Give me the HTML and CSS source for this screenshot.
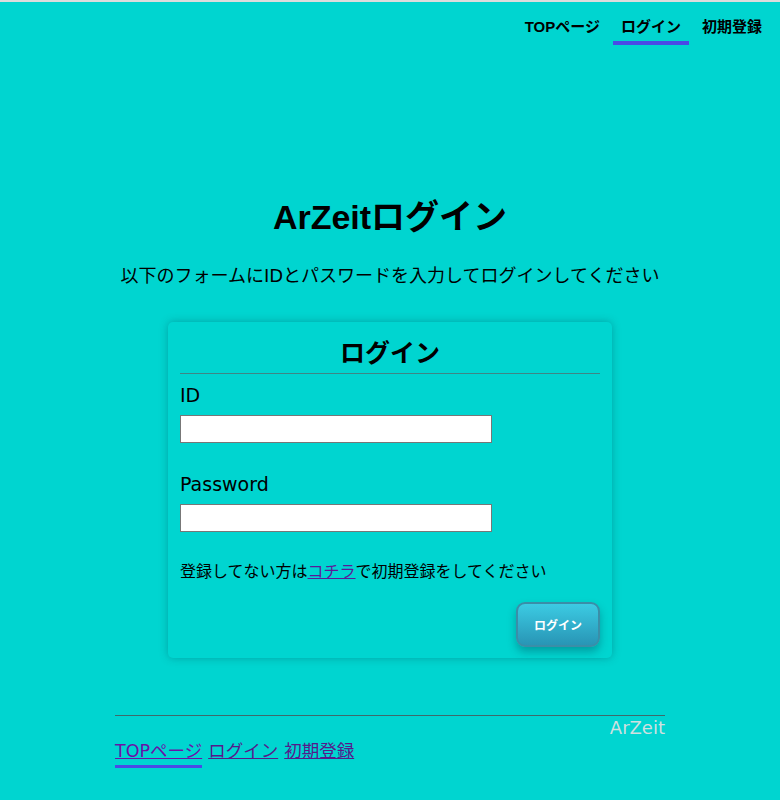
FILE: index.html
```html
<!DOCTYPE html>
<html lang="ja">
<head>
<meta charset="utf-8">
<title>ArZeitログイン</title>
<link rel="stylesheet" href="styles.css">
</head>
<body>
<header class="topbar">
  <ul class="nav">
    <li class="nav-item"><a class="nav-link" href="#">TOPページ</a></li>
    <li class="nav-item nav-item-active"><a class="nav-link" href="#">ログイン</a></li>
    <li class="nav-item"><a class="nav-link" href="#">初期登録</a></li>
  </ul>
</header>
<main class="main">
  <h1 class="title">ArZeitログイン</h1>
  <p class="lead">以下のフォームにIDとパスワードを入力してログインしてください</p>
  <form class="card">
    <h2 class="card-title">ログイン</h2>
    <label class="field-label field-label-first" for="uid">ID</label>
    <input class="field-input" id="uid" type="text">
    <label class="field-label" for="pw">Password</label>
    <input class="field-input" id="pw" type="password">
    <p class="note">登録してない方は<a class="note-link" href="#">コチラ</a>で初期登録をしてください</p>
    <div class="actions"><button class="btn" type="button">ログイン</button></div>
  </form>
</main>
<footer class="footer">
  <div class="brand">ArZeit</div>
  <div class="foot-links">
    <a class="foot-link foot-link-active" href="#">TOPページ</a>
    <a class="foot-link" href="#">ログイン</a>
    <a class="foot-link" href="#">初期登録</a>
  </div>
</footer>
</body>
</html>
```
FILE: styles.css
```css
html, body {
  margin: 0;
  padding: 0;
}
body {
  background: #00d5d0;
  border-top: 2px solid #dcdcdc;
  min-height: 798px;
  font-family: "DejaVu Sans", "Noto Sans CJK JP", sans-serif;
  color: #000;
}
.topbar {
  display: flex;
  justify-content: flex-end;
  padding-right: 10px;
}
.nav {
  list-style: none;
  margin: 0;
  padding: 0;
  display: flex;
  gap: 5px;
}
.nav-item {
  padding: 15px 8px 4px;
  border-bottom: 4px solid transparent;
}
.nav-item-active {
  border-bottom-color: #4a4ae6;
}
.nav-link {
  display: block;
  font-family: "Liberation Sans", "Noto Sans CJK JP", sans-serif;
  font-weight: bold;
  font-size: 15px;
  line-height: 20px;
  color: #000;
  text-decoration: none;
}
.main {
  display: flex;
  flex-direction: column;
  align-items: center;
}
.title {
  margin: 152px 0 0;
  font-family: "Liberation Sans", "Noto Sans CJK JP", sans-serif;
  font-size: 34px;
  line-height: 40px;
  font-weight: bold;
}
.lead {
  margin: 27px 0 0;
  font-size: 18px;
  line-height: 24px;
}
.card {
  margin-top: 34px;
  width: 420px;
  padding: 16px 12px 11px;
  border-radius: 5px;
  box-shadow: 0 0 9px rgba(0, 70, 80, 0.35);
  display: flex;
  flex-direction: column;
  align-items: flex-start;
}
.card-title {
  align-self: stretch;
  margin: 0;
  padding-bottom: 3px;
  border-bottom: 1px solid #3f8585;
  text-align: center;
  font-size: 25px;
  line-height: 32px;
  font-weight: bold;
}
.field-label {
  margin-top: 29px;
  font-size: 19px;
  line-height: 24px;
}
.field-label-first {
  margin-top: 9px;
}
.field-input {
  margin: 8px 0 0;
  box-sizing: border-box;
  width: 312px;
  height: 28px;
  border: 1px solid #777;
  background: #fff;
  padding: 0 4px;
}
.note {
  margin: 28px 0 0;
  font-size: 16px;
  line-height: 24px;
}
.note-link {
  color: #5a1a9a;
}
.actions {
  align-self: stretch;
  display: flex;
  justify-content: flex-end;
  margin-top: 18px;
}
.btn {
  width: 84px;
  height: 45px;
  border: 2px solid #3a8ea8;
  border-radius: 9px;
  background: linear-gradient(#3ccbe3, #2895b5);
  box-shadow: 0 5px 8px rgba(0, 60, 80, 0.35);
  color: #fff;
  font-family: "DejaVu Sans", "Noto Sans CJK JP", sans-serif;
  font-size: 12px;
  font-weight: bold;
  padding: 0;
}
.footer {
  width: 550px;
  margin: 57px auto 0;
  border-top: 1px solid #3d6b6b;
  display: flex;
  flex-direction: column;
}
.brand {
  align-self: flex-end;
  color: #cfe0e0;
  font-size: 18px;
  line-height: 22px;
  padding-top: 1px;
}
.foot-links {
  display: flex;
  gap: 6px;
  align-items: flex-start;
}
.foot-link {
  font-size: 17.5px;
  line-height: 24px;
  color: #551a8b;
  padding-bottom: 2px;
  border-bottom: 3px solid transparent;
}
.foot-link-active {
  color: #6a12a8;
  border-bottom-color: #4a4ae6;
}
```
